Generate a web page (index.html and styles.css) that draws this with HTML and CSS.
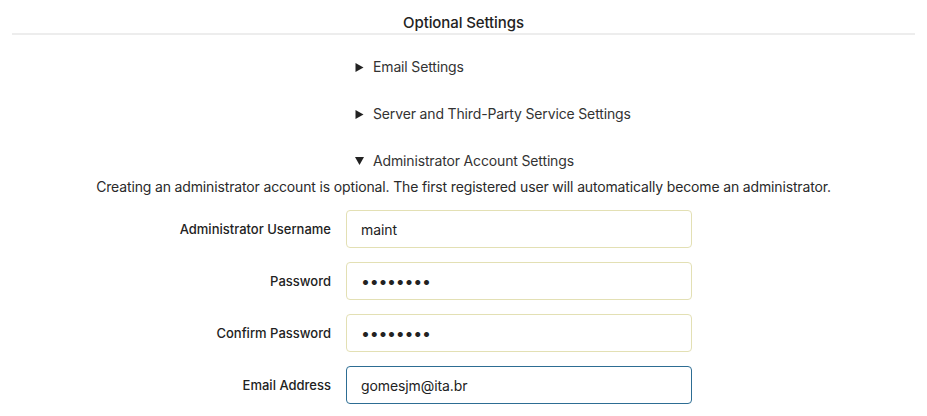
FILE: index.html
```html
<!DOCTYPE html>
<html lang="en">
<head>
<meta charset="utf-8">
<title>Optional Settings</title>
<link rel="stylesheet" href="styles.css">
</head>
<body>
<div class="page">
  <h4 class="dividing-header">Optional Settings</h4>
  <div class="sections">
    <div class="summary">
      <svg class="marker" width="8" height="9" viewBox="0 0 8 9"><path d="M0 0 L8 4.5 L0 9 Z" fill="#222"/></svg>
      <span>Email Settings</span>
    </div>
    <div class="summary">
      <svg class="marker" width="8" height="9" viewBox="0 0 8 9"><path d="M0 0 L8 4.5 L0 9 Z" fill="#222"/></svg>
      <span>Server and Third-Party Service Settings</span>
    </div>
    <div class="summary">
      <svg class="marker" width="9" height="8" viewBox="0 0 9 8"><path d="M0 0 L9 0 L4.5 8 Z" fill="#222"/></svg>
      <span>Administrator Account Settings</span>
    </div>
  </div>
  <p class="help">Creating an administrator account is optional. The first registered user will automatically become an administrator.</p>
  <form class="form">
    <div class="field">
      <label for="admin_name">Administrator Username</label>
      <input id="admin_name" class="input autofill" type="text" value="maint">
    </div>
    <div class="field">
      <label for="admin_passwd">Password</label>
      <input id="admin_passwd" class="input autofill pw" type="password" value="12345678">
    </div>
    <div class="field">
      <label for="admin_confirm">Confirm Password</label>
      <input id="admin_confirm" class="input autofill pw" type="password" value="12345678">
    </div>
    <div class="field">
      <label for="admin_email">Email Address</label>
      <input id="admin_email" class="input focused" type="email" value="gomesjm@ita.br">
    </div>
  </form>
</div>
</body>
</html>
```

FILE: styles.css
```css
* { box-sizing: border-box; }
body {
  margin: 0;
  background: #fff;
  color: #2a2a2a;
  font-family: Inter, "Noto Sans", "Liberation Sans", sans-serif;
  font-size: 14px;
  letter-spacing: -0.15px;
}
.page {
  padding: 0 12px;
}
.dividing-header {
  margin: 0;
  padding: 13px 0 0;
  line-height: 20px;
  font-size: 15px;
  font-weight: 500;
  letter-spacing: -0.1px;
  text-align: center;
  color: #222;
  border-bottom: 2px solid #ededed;
}
.sections {
  margin-top: 22px;
  display: flex;
  flex-direction: column;
  gap: 27px;
}
.summary {
  display: flex;
  align-items: center;
  padding-left: 343px;
  line-height: 20px;
  color: #333;
}
.marker {
  width: 9px;
  margin-right: 9px;
}
.help {
  margin: 6px 0 0;
  line-height: 20px;
  text-align: center;
  color: #2a2a2a;
}
.form {
  margin-top: 13px;
  display: flex;
  flex-direction: column;
  gap: 14px;
}
.field {
  display: flex;
  align-items: center;
}
.field label {
  width: 319px;
  text-align: right;
  font-size: 13px;
  font-weight: 500;
  letter-spacing: 0;
  color: #222;
  margin-right: 15px;
}
.input {
  width: 346px;
  height: 38px;
  padding: 0 14px;
  border-radius: 4px;
  font-family: inherit;
  font-size: 14px;
  letter-spacing: -0.1px;
  color: #222;
  background: #fff;
  outline: none;
}
.autofill {
  border: 1px solid #e3e0b4;
}
.focused {
  border: 1px solid #2d6d93;
}
.pw {
  font-size: 16px;
  letter-spacing: -0.3px;
}
```
